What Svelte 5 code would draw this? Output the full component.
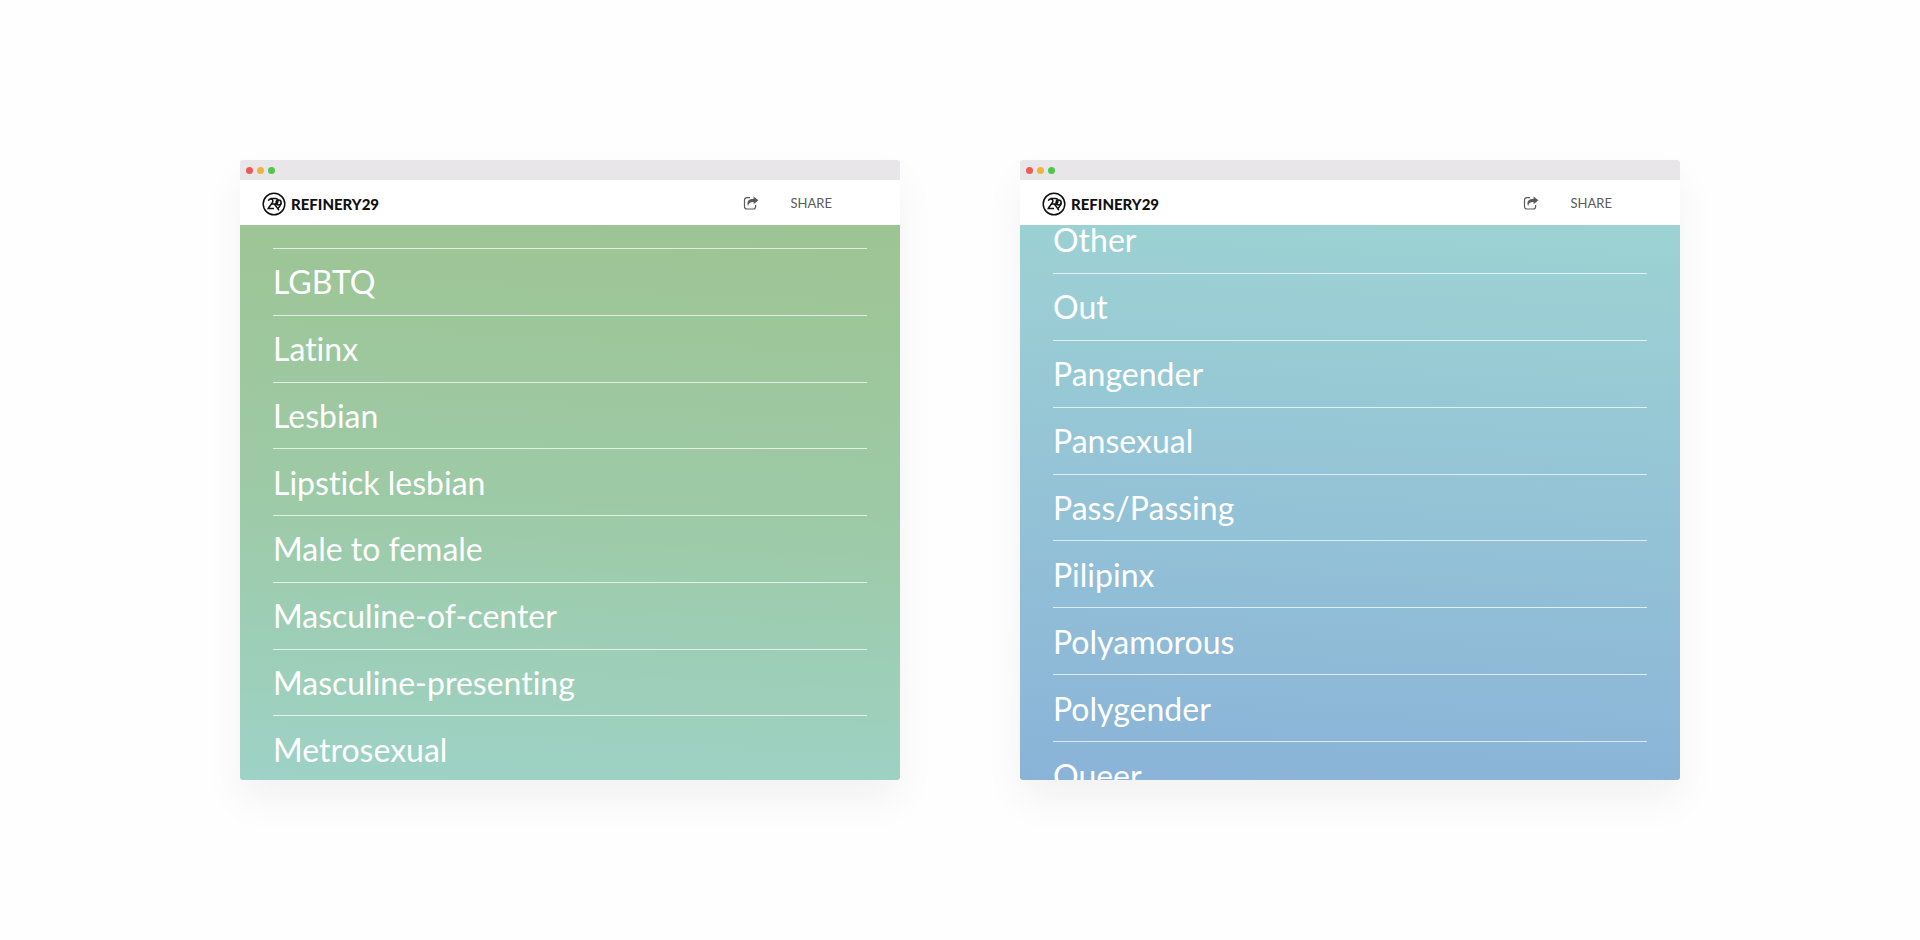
<script>
  const screens = [
    {
      name: "green",
      terms: [
        "LGBTQ",
        "Latinx",
        "Lesbian",
        "Lipstick lesbian",
        "Male to female",
        "Masculine-of-center",
        "Masculine-presenting",
        "Metrosexual",
      ],
    },
    {
      name: "blue",
      terms: [
        "Other",
        "Out",
        "Pangender",
        "Pansexual",
        "Pass/Passing",
        "Pilipinx",
        "Polyamorous",
        "Polygender",
        "Queer",
      ],
    },
  ];
</script>

<style>
  :global(body) {
    margin: 0;
    background: #fefefe;
    font-family: Lato, "Open Sans", sans-serif;
    font-variant-ligatures: none;
  }

  .showcase {
    display: grid;
    grid-template-columns: 1fr 1fr;
    gap: 120px;
    padding: 160px 12.5%;
  }

  .window {
    border-radius: 3px;
    overflow: hidden;
    background: #fff;
    box-shadow: 0 20px 40px rgba(0, 0, 0, 0.05);
  }

  .titlebar {
    display: flex;
    align-items: center;
    gap: 4px;
    height: 20px;
    padding-left: 6px;
    background: #e8e6e9;
  }
  .dot {
    width: 7px;
    height: 7px;
    border-radius: 50%;
  }
  .close {
    background: #ec5b54;
  }
  .minimize {
    background: #f0b43e;
  }
  .zoom {
    background: #4fc74b;
  }

  header {
    display: flex;
    align-items: center;
    justify-content: space-between;
    height: 45px;
    padding: 0 68px 0 22px;
  }
  a {
    color: inherit;
    text-decoration: none;
  }
  .brand {
    display: flex;
    align-items: center;
    gap: 5px;
    padding-top: 2px;
    color: #111;
    font-size: 15px;
    font-weight: 900;
  }
  .brand svg {
    width: 24px;
    height: 24px;
  }
  .share {
    display: flex;
    align-items: center;
    gap: 32px;
    color: #5a5a5a;
    font-size: 13px;
  }
  .share svg {
    width: 16px;
    height: 14px;
  }

  .terms {
    height: 555px;
    overflow: hidden;
  }
  .green {
    background: linear-gradient(183deg, #9dc493, #9dcaa6 50%, #9dd2c6);
  }
  .blue {
    background: linear-gradient(183deg, #9dd3d3, #94c3d6 50%, #8ab3d8);
  }

  ul {
    margin: 0 33px;
    padding: 0;
    list-style: none;
    display: grid;
  }
  .green ul {
    margin-top: 23px;
    height: 534px;
    grid-template-rows: repeat(8, 1fr);
    border-top: 1px solid rgba(255, 255, 255, 0.7);
  }
  .blue ul {
    margin-top: -18px;
    height: 602px;
    grid-template-rows: repeat(9, 1fr);
  }
  li {
    display: flex;
    align-items: center;
    border-bottom: 1px solid rgba(255, 255, 255, 0.7);
    color: #fff;
    font-size: 32px;
  }
</style>

<main class="showcase">
  {#each screens as screen}
    <section class="window">
      <div class="titlebar">
        <span class="dot close"></span>
        <span class="dot minimize"></span>
        <span class="dot zoom"></span>
      </div>
      <header>
        <a class="brand" href="#home">
          <svg viewBox="0 0 24 24" fill="none" stroke="currentColor" stroke-width="1.5" aria-hidden="true">
            <circle cx="12" cy="12" r="10.8" />
            <path d="M6.4 8.8C7 6.2 11.4 6.6 10.8 9.5C10.4 11.6 8 13.4 6.2 16.6H12" />
            <path d="M8.4 6.6H13.4C16.8 6.6 16.8 12 13.4 12H9.4M12.4 12L17 18.4" />
            <circle cx="16.6" cy="10.6" r="2.5" />
            <path d="M19.1 10.7C19.1 13 17.6 14.8 15.6 16.8" />
          </svg>
          <span>REFINERY29</span>
        </a>
        <a class="share" href="#share">
          <svg viewBox="0 0 16 14" aria-hidden="true">
            <path
              d="M7 1.7H4Q1.5 1.7 1.5 4V10.8Q1.5 13 4 13H10.2Q12.6 13 12.6 10.8V9"
              fill="none"
              stroke="currentColor"
              stroke-width="1.2"
            />
            <path d="M10.6 0.4L15.4 4.3L10.6 8.2V6C7.4 5.8 5.8 7 5.1 10.2C3.2 5.4 5.6 2.8 10.6 2.7Z" fill="currentColor" />
          </svg>
          <span>SHARE</span>
        </a>
      </header>
      <div class="terms {screen.name}">
        <ul>
          {#each screen.terms as term}
            <li>{term}</li>
          {/each}
        </ul>
      </div>
    </section>
  {/each}
</main>
